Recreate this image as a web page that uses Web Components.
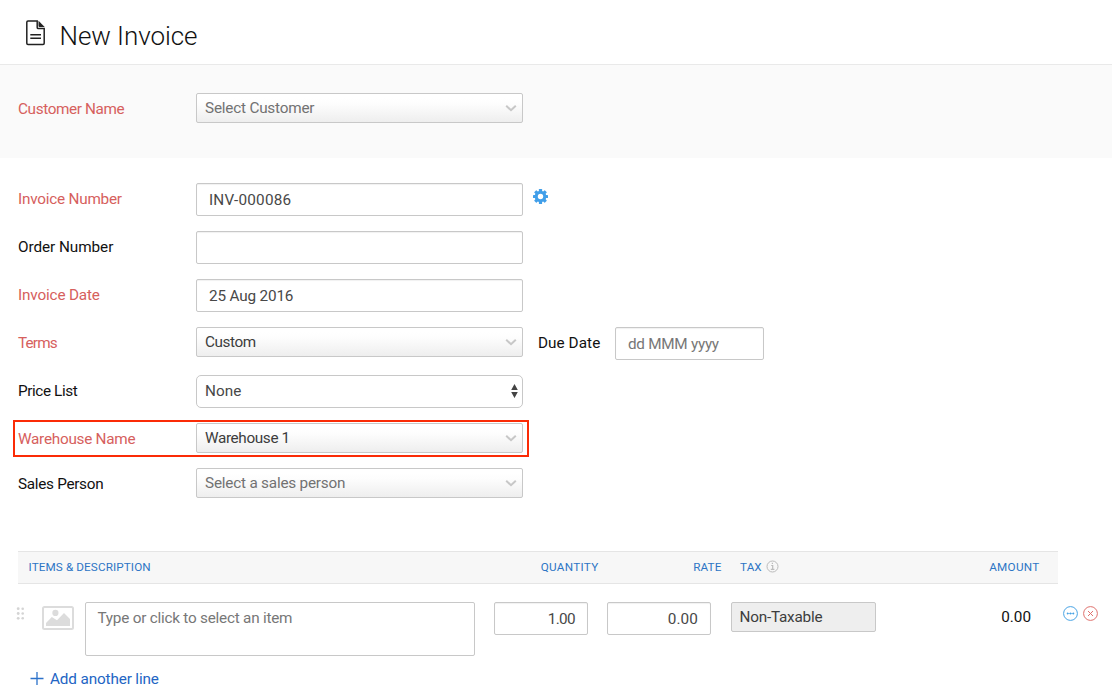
<!DOCTYPE html>
<html lang="en">
<head>
<meta charset="utf-8">
<title>New Invoice</title>
<style>
html,body{margin:0;padding:0;background:#fff}
body{font:15.300px/20px Roboto,"Liberation Sans",sans-serif;color:#111;width:1112px;height:695px;overflow:hidden}
</style>
</head>
<body>
<invoice-page></invoice-page>
<script>
const define = (name, html, setup) => {
  const t = document.createElement('template');
  t.innerHTML = html;
  customElements.define(name, class extends HTMLElement {
    connectedCallback() {
      if (this.shadowRoot) return;
      this.attachShadow({mode: 'open'}).append(t.content.cloneNode(true));
      if (setup) setup(this, this.shadowRoot);
    }
  });
};

/* Text whose tracking is adjusted so that it occupies the given width. */
define('fit-text', `<style>:host{display:inline-block;white-space:nowrap}span{display:inline-block;white-space:nowrap}</style><span><slot></slot></span>`,
  (el, root) => {
    const s = root.querySelector('span');
    const want = +el.getAttribute('w') - .7;
    const n = el.textContent.length;
    const gap = (want - s.getBoundingClientRect().width) / n;
    s.style.letterSpacing = gap.toFixed(3) + 'px';
  });

define('page-header', `<style>
:host{display:flex;box-sizing:border-box;height:65px;border-bottom:1px solid #e9e9e9;padding:20px 0 0 26px}
svg{display:block;width:20px;height:26px}
h1{margin:1px 0 0 13.500px;font-weight:300;font-size:26px;line-height:30px;color:#111}
</style>
<svg viewBox="0 0 20 26" fill="none" stroke="#222" stroke-width="1.500"><path d="M11.200 1H2Q.8 1 .8 2.200V23.300Q.8 24.500 2 24.500H17Q18.200 24.500 18.200 23.300V8.500H12.300Q11.200 8.500 11.200 7.400Z"/><path d="M12.500 .8L18.700 6.900H13.500Q12.500 6.900 12.500 5.900Z" fill="#222" stroke="none"/><path d="M4.300 14.800H15M4.300 18.300H15"/></svg>
<h1><slot></slot></h1>`);

define('form-row', `<style>
:host{display:flex;position:relative;align-items:flex-start;height:48px;padding-left:18px;box-sizing:border-box}
.label{width:178px;line-height:32px;color:#111}
:host([required]) .label{color:#d6605d}
:host([short]){height:45px}
:host([marked])::after{content:"";position:absolute;left:13px;top:-3px;width:516px;height:37px;box-sizing:border-box;border:2px solid #fb2b06}
</style><div class="label"><slot name="label"></slot></div><slot></slot>`);

define('select-box', `<style>
:host{display:flex;box-sizing:border-box;width:327px;height:30px;border:1px solid #c8c8c8;border-radius:2px;background:linear-gradient(#fff 15%,#fdfdfd 35%,#eee);color:#3d3d3d;line-height:28px;padding:0 5px 0 8px;justify-content:space-between;align-items:center}
:host([empty]){color:#727272}
:host([disabled]){width:145px;background:#eee;padding-left:7.500px}
:host([disabled]) svg{display:none}
svg{width:12px;height:8px}
</style><slot></slot><svg viewBox="0 0 12 8" fill="none" stroke="#c7c7c7" stroke-width="2"><path d="M1.200 1.700L6 6.200L10.800 1.700"/></svg>`);

define('native-select', `<style>
:host{display:flex;box-sizing:border-box;width:327px;height:33px;border:1px solid #c8c8c8;border-radius:5px;color:#484848;line-height:30px;padding:0 4px 1px 8px;justify-content:space-between;align-items:flex-start}
svg{width:7px;height:14px;margin-top:8px}
</style><slot></slot><svg viewBox="0 0 7 14" fill="#444"><path d="M3.500 0L6.800 6H.2ZM.2 8H6.800L3.500 14Z"/></svg>`);

define('text-box', `<style>
:host{display:block;box-sizing:border-box;width:327px;height:33px;border:1px solid #c8c8c8;border-radius:2px;background:#fff;box-shadow:inset 0 1px 1px rgba(0,0,0,.06);color:#484848;line-height:32px;padding:0 12px}
:host([empty]){color:#777}
:host([number]){text-align:right}
:host([area]){width:390px;height:54px;line-height:31px;box-shadow:none;padding-left:11.500px}
</style><slot></slot>`);

define('gear-icon', `<style>:host{display:block;margin:6px 0 0 10px;width:15px;height:15px}svg{display:block}</style>
<svg width="15" height="15" viewBox="-7.500 -7.500 15 15"><g fill="#419fe9"><rect x="-1.600" y="-7.500" width="3.200" height="15" rx=".5"/><rect x="-7.500" y="-1.600" width="15" height="3.200" rx=".5"/><g transform="rotate(45)"><rect x="-1.600" y="-7.500" width="3.200" height="15" rx=".5"/><rect x="-7.500" y="-1.600" width="15" height="3.200" rx=".5"/></g><circle r="5.800"/></g><circle r="2.700" fill="#fff"/></svg>`);

define('table-head', `<style>
:host{display:grid;grid-template-columns:440px 140.500px 123px 200px 118px;box-sizing:border-box;width:1040px;height:33px;margin-left:18px;border:solid #e5e5e5;border-width:1px 0;background:#f7f7f7;color:#2d75c5;font-size:11.700px;line-height:31px}
div{display:flex}.first{padding-left:10.500px}.r{justify-content:flex-end}.tax{padding-left:18.500px;gap:4.500px}
svg{margin-top:8px}
</style><div class="first"><fit-text w="123">ITEMS &amp; DESCRIPTION</fit-text></div>
<div class="r"><fit-text w="58.500">QUANTITY</fit-text></div><div class="r"><fit-text w="29">RATE</fit-text></div>
<div class="tax"><fit-text w="22.500">TAX</fit-text><svg width="13" height="13" viewBox="0 0 13 13" fill="none" stroke="#bbb"><circle cx="6.500" cy="6.500" r="5.500"/><path d="M5.200 5.500H6.700V9.300M4.800 9.300H8.400M5.800 3.400H7" stroke-width="1.200"/></svg></div>
<div class="r"><fit-text w="51">AMOUNT</fit-text></div>`);

define('line-item', `<style>
:host{display:flex;align-items:flex-start;height:66px;padding-left:16px}
.drag{margin:5px 18px 0 0}.pic{margin:4px 11px 0 0}
.qty{width:94px;margin-left:19px}.rate{width:104px;margin:0 20px 0 19px}
.amount{width:155px;text-align:right;line-height:31px;color:#111}
.more{margin:4px 5px 0 32px}.del{margin-top:4px}
svg{display:block;flex:none}
</style>
<svg class="drag" width="8" height="14" viewBox="0 0 8 14" fill="#d4d4d4"><circle cx="2.200" cy="1.700" r="1.400"/><circle cx="6.700" cy="1.700" r="1.300"/><circle cx="2.200" cy="6.500" r="1.400"/><circle cx="6.700" cy="6.500" r="1.300"/><circle cx="2.200" cy="11.300" r="1.400"/><circle cx="6.700" cy="11.300" r="1.300"/></svg>
<svg class="pic" width="32" height="24" viewBox="0 0 32 24" fill="#dcdcdc"><rect x="1" y="1" width="30" height="22" rx="1.500" fill="none" stroke="#dcdcdc" stroke-width="2"/><circle cx="13.400" cy="6.900" r="3.100"/><path d="M4 20V17L9.800 11L15 14.200L22 7L28 13V20Z"/></svg>
<text-box area empty><fit-text w="195.500">Type or click to select an item</fit-text></text-box>
<text-box class="qty" number><fit-text w="28">1.00</fit-text></text-box>
<text-box class="rate" number><fit-text w="31">0.00</fit-text></text-box>
<select-box disabled><fit-text w="83.500">Non-Taxable</fit-text></select-box>
<div class="amount"><fit-text w="30.500">0.00</fit-text></div>
<svg class="more" width="15" height="15" viewBox="0 0 15 15" fill="none" stroke="#48a3e4"><circle cx="7.500" cy="7.500" r="6.900"/><path d="M4 7.500H11" stroke-width=".6"/><g fill="#48a3e4" stroke="none"><circle cx="4.600" cy="7.500" r=".9"/><circle cx="7.500" cy="7.500" r=".9"/><circle cx="10.400" cy="7.500" r=".9"/></g></svg>
<svg class="del" width="15" height="15" viewBox="0 0 15 15" fill="none" stroke="#df716d"><circle cx="7.500" cy="7.500" r="6.900"/><path d="M5 5L10 10M10 5L5 10"/></svg>`);

define('add-line', `<style>:host{display:flex;color:#2365c4;padding-left:30px;gap:6px;line-height:22px}svg{display:block;margin-top:4px}</style>
<svg width="14" height="14" viewBox="0 0 14 14" stroke="#2c72ca" stroke-width="1.300"><path d="M.5 6.500H13.500M7 0V13"/></svg><slot></slot>`);

define('invoice-page', `<style>
:host{display:block}
.customer{background:#fafafa;padding-top:28px;box-sizing:border-box;height:93px}
.fields{padding-top:25px;height:368px}
.due{line-height:32px;margin:0 14px 0 15px;width:63px;color:#111}
.date{width:149px}
line-item{margin-top:18px}
</style>
<page-header><fit-text w="138.700">New Invoice</fit-text></page-header>
<section class="customer"><form-row required><fit-text slot="label" w="107">Customer Name</fit-text><select-box empty><fit-text w="110">Select Customer</fit-text></select-box></form-row></section>
<section class="fields">
<form-row required><fit-text slot="label" w="104.500">Invoice Number</fit-text><text-box><fit-text w="83">INV-000086</fit-text></text-box><gear-icon></gear-icon></form-row>
<form-row><fit-text slot="label" w="96">Order Number</fit-text><text-box></text-box></form-row>
<form-row required><fit-text slot="label" w="82.500">Invoice Date</fit-text><text-box><fit-text w="85">25 Aug 2016</fit-text></text-box></form-row>
<form-row required><fit-text slot="label" w="39.500">Terms</fit-text><select-box><fit-text w="51.500">Custom</fit-text></select-box><div class="due"><fit-text w="63">Due Date</fit-text></div><text-box class="date" empty><fit-text w="91.500">dd MMM yyyy</fit-text></text-box></form-row>
<form-row><fit-text slot="label" w="60">Price List</fit-text><native-select><fit-text w="37">None</fit-text></native-select></form-row>
<form-row required short marked><fit-text slot="label" w="118">Warehouse Name</fit-text><select-box><fit-text w="85.500">Warehouse 1</fit-text></select-box></form-row>
<form-row><fit-text slot="label" w="86">Sales Person</fit-text><select-box empty><fit-text w="141">Select a sales person</fit-text></select-box></form-row>
</section>
<table-head></table-head>
<line-item></line-item>
<add-line><fit-text w="109.500">Add another line</fit-text></add-line>`);
</script>
</body>
</html>
